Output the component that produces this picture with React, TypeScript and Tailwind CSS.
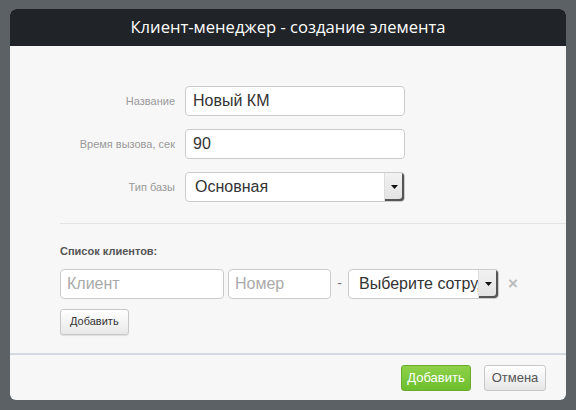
import React from 'react';

const arial = { fontFamily: '"Liberation Sans", Arial, sans-serif' };

function Caret() {
  return (
    <span className="flex h-full w-[20px] items-center justify-center border-l border-[#ddd] bg-gradient-to-b from-[#f2f2f2] to-[#e2e2e2] shadow-[inset_-2px_-2px_0_#555] rounded-r-[3px]">
      <svg width="7" height="4" viewBox="0 0 7 4">
        <path d="M0 0h7L3.5 4z" fill="#111" />
      </svg>
    </span>
  );
}

export default function App() {
  return (
    <div className="h-[410px] w-[576px] bg-[#5c6165] pt-[9px] pl-[10px]" style={arial}>
      <div className="flex h-[391px] w-[556px] flex-col overflow-hidden rounded-[6px] bg-[#f7f7f7]">
        <div
          className="flex h-[37px] items-center justify-center bg-[#202327] text-[16.6px] text-white"
          style={{ fontFamily: '"Open Sans", "Noto Sans", sans-serif' }}
        >
          Клиент-менеджер - создание элемента
        </div>

        <div className="flex-1">
          <div className="flex flex-col gap-[13px] pt-[40px]">
            <div className="flex items-center">
              <label className="w-[175px] pr-[10px] text-right text-[11px] text-[#999]">Название</label>
              <input
                defaultValue="Новый КМ"
                className="h-[30px] w-[220px] rounded-[4px] border border-[#ccc] bg-white px-[7px] text-[16px] text-[#333] outline-none"
              />
            </div>
            <div className="flex items-center">
              <label className="w-[175px] pr-[10px] text-right text-[11px] text-[#999]">Время вызова, сек</label>
              <input
                defaultValue="90"
                className="h-[30px] w-[220px] rounded-[4px] border border-[#ccc] bg-white px-[7px] text-[16px] text-[#333] outline-none"
              />
            </div>
            <div className="flex items-center">
              <label className="w-[175px] pr-[10px] text-right text-[11px] text-[#999]">Тип базы</label>
              <div className="flex h-[30px] w-[220px] items-center rounded-[4px] border border-[#ccc] bg-white">
                <span className="flex-1 px-[9px] text-[16px] text-[#333]">Основная</span>
                <Caret />
              </div>
            </div>
          </div>

          <div className="ml-[50px] mt-[21px] border-t border-[#e3e3e3]" />

          <div className="pl-[50px] pt-[19px]">
            <div className="text-[11px] font-bold text-[#555]">Список клиентов:</div>
            <div className="mt-[9px] flex h-[30px] items-center">
              <input
                placeholder="Клиент"
                className="h-[30px] w-[164px] rounded-[4px] border border-[#ccc] bg-white px-[6px] text-[16px] text-[#333] placeholder-[#aaa] outline-none"
              />
              <input
                placeholder="Номер"
                className="ml-[4px] h-[30px] w-[103px] rounded-[4px] border border-[#ccc] bg-white px-[6px] text-[16px] text-[#333] placeholder-[#aaa] outline-none"
              />
              <span className="w-[17px] text-center text-[14px] text-[#777]">-</span>
              <div className="flex h-[30px] w-[151px] items-center overflow-hidden rounded-[4px] border border-[#ccc] bg-white">
                <span className="min-w-0 flex-1 overflow-hidden whitespace-nowrap pl-[10px] text-[16px] text-[#333]">Выберите сотрудника</span>
                <Caret />
              </div>
              <span className="ml-[9px] text-[17px] font-bold leading-none text-[#bbb]">×</span>
            </div>
            <button className="mt-[10px] h-[26px] rounded-[3px] border border-[#c8c8c8] bg-gradient-to-b from-white to-[#e8e8e8] px-[9px] text-[11px] text-[#333] shadow-[0_1px_1px_rgba(0,0,0,0.1)]">
              Добавить
            </button>
          </div>
        </div>

        <div className="flex h-[47px] items-center justify-end gap-[13px] border-t-2 border-[#d2d9e0] pr-[20px]">
          <button className="h-[26px] w-[70px] rounded-[3px] border border-[#6aaa2c] bg-gradient-to-b from-[#8fd14a] to-[#6cbf2c] text-[13px] text-white">
            Добавить
          </button>
          <button className="h-[26px] w-[62px] rounded-[3px] border border-[#c8c8c8] bg-gradient-to-b from-white to-[#e6e6e6] text-[13px] text-[#555]">
            Отмена
          </button>
        </div>
      </div>
    </div>
  );
}
